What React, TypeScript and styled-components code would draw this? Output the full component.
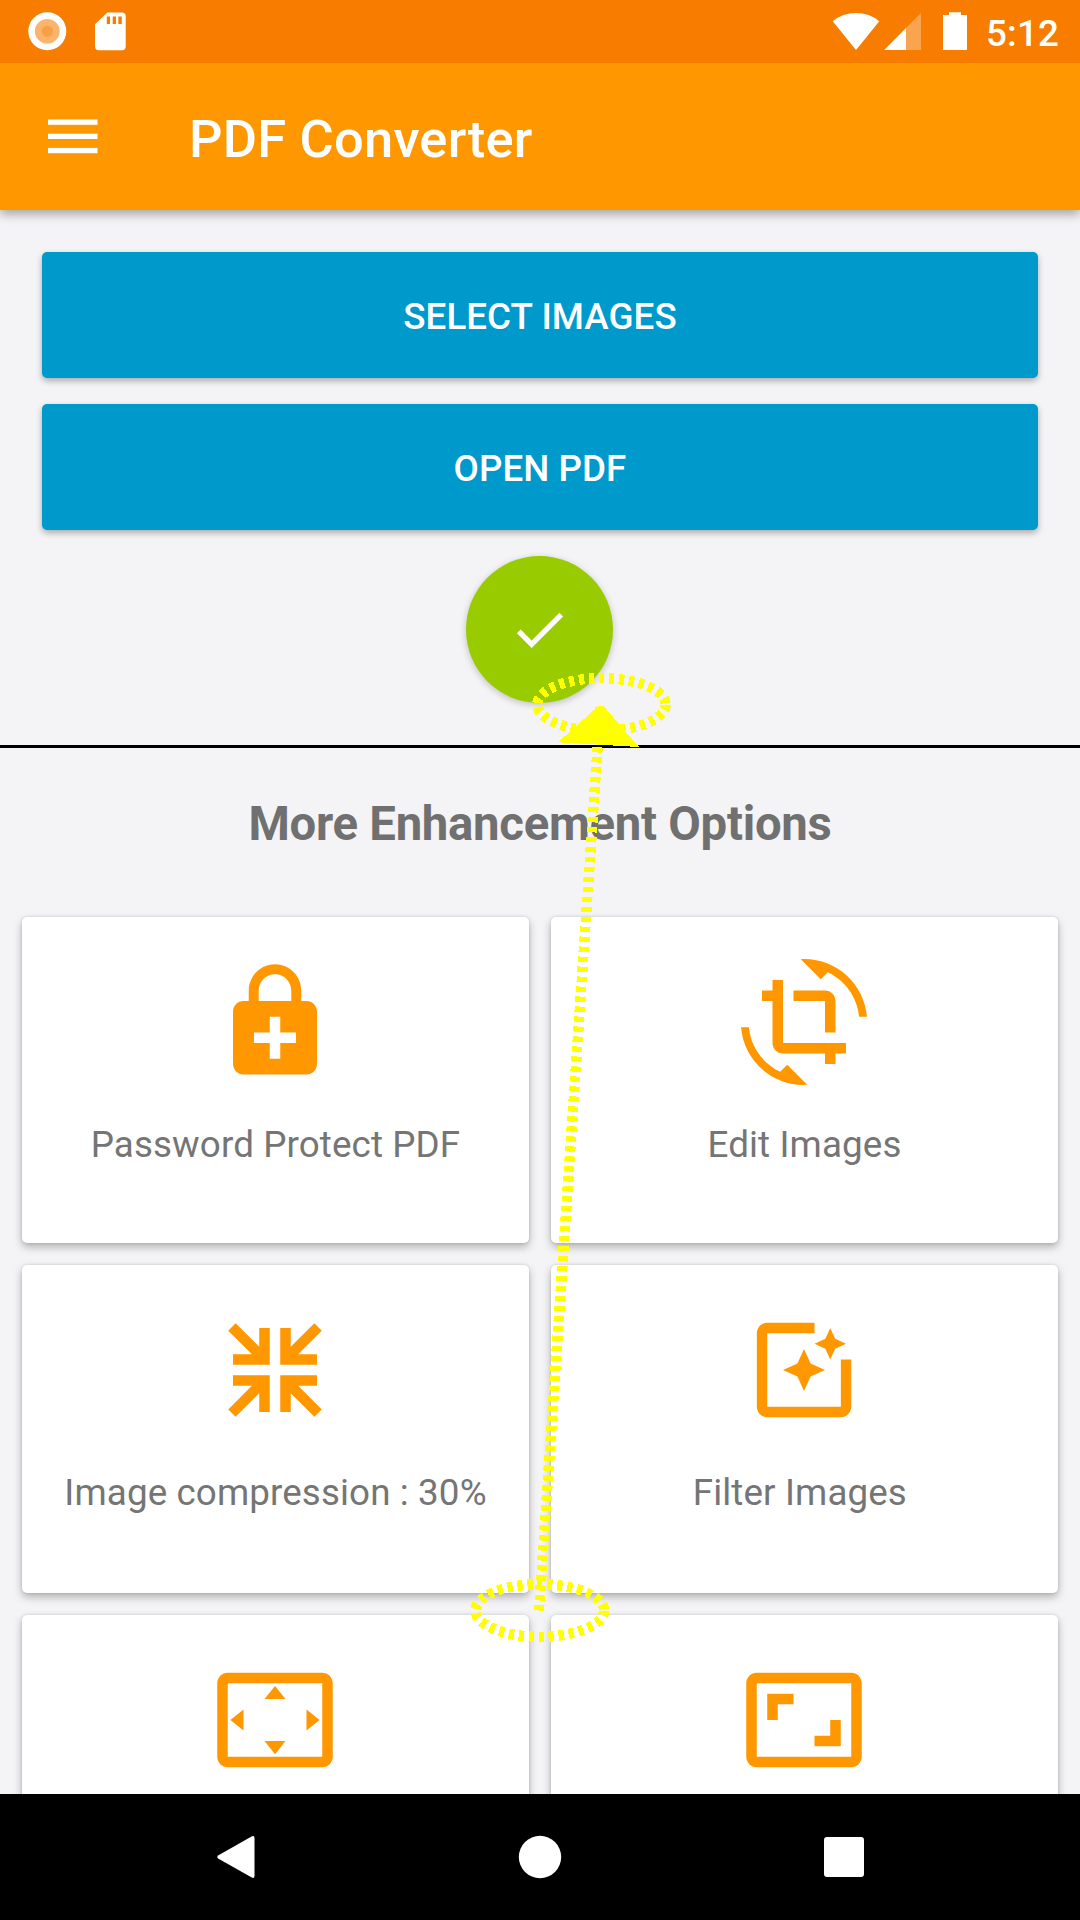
import React from "react";
import styled, { createGlobalStyle } from "styled-components";

const GlobalStyle = createGlobalStyle`
  *, *::before, *::after { box-sizing: border-box; }
  html, body { margin: 0; padding: 0; background: #f4f4f6; }
  svg { display: block; flex: none; }
`;

const ORANGE = "#ff9800";

const Screen = styled.div`
  position: relative;
  display: flex;
  flex-direction: column;
  width: 1080px;
  height: 1920px;
  overflow: hidden;
  background: #f4f4f6;
  font-family: Roboto, "Noto Sans", sans-serif;
`;

const StatusBar = styled.header`
  position: relative;
  z-index: 2;
  display: flex;
  justify-content: space-between;
  flex: none;
  height: 63px;
  padding: 0 21px 0 28px;
  background: #f77c00;
`;

const StatusGroup = styled.div`
  display: flex;
`;

const Clock = styled.span`
  width: 73px;
  padding-top: 12px;
  margin-left: 19px;
  color: #fff;
  font-size: 36.75px;
  font-weight: 500;
  letter-spacing: 0.2px;
  line-height: 43px;
  white-space: nowrap;
`;

const AppBar = styled.div`
  position: relative;
  z-index: 1;
  display: flex;
  align-items: center;
  flex: none;
  height: 147px;
  padding-left: 48px;
  background: ${ORANGE};
  box-shadow: 0 4px 10px rgba(0, 0, 0, 0.34);
`;

const Title = styled.h1`
  margin: 4px 0 0 91px;
  color: #fff;
  font-size: 52.5px;
  font-weight: 500;
  letter-spacing: 0.2px;
  line-height: 62px;
`;

const Content = styled.main`
  display: flex;
  flex-direction: column;
  flex: 1;
  min-height: 0;
  overflow: hidden;
`;

const Actions = styled.section`
  display: flex;
  flex-direction: column;
  align-items: center;
  flex: none;
  gap: 26px;
  height: 535px;
  padding: 42px 42px 0;
`;

const ActionButton = styled.button`
  flex: none;
  width: 100%;
  height: 126px;
  padding: 2px 0 0;
  border: 0;
  border-radius: 5px;
  background: #0099cc;
  box-shadow: 0 3px 6px rgba(0, 0, 0, 0.3);
  color: #fff;
  font-family: inherit;
  font-size: 36.75px;
  font-weight: 500;
  letter-spacing: 0.05px;
  text-transform: uppercase;
`;

const ConfirmButton = styled.button`
  display: flex;
  align-items: center;
  justify-content: center;
  flex: none;
  width: 147px;
  height: 147px;
  margin-right: 1px;
  padding: 0;
  border: 0;
  border-radius: 50%;
  background: #99cc00;
  box-shadow: 0 2px 7px rgba(0, 0, 0, 0.22);
`;

const Divider = styled.hr`
  flex: none;
  width: 100%;
  height: 3px;
  margin: 0;
  border: 0;
  background: #000;
`;

const Heading = styled.h2`
  flex: none;
  height: 169px;
  margin: 0;
  padding-top: 48px;
  color: #707070;
  font-size: 47.25px;
  font-weight: 700;
  letter-spacing: -0.26px;
  line-height: 56px;
  text-align: center;
`;

const Grid = styled.section`
  display: grid;
  flex: none;
  grid-template-columns: 507px 507px;
  grid-template-rows: 326px 328px 328px;
  gap: 22px;
  padding-left: 22px;
`;

const Card = styled.article`
  display: flex;
  flex-direction: column;
  align-items: center;
  padding: 42px 1px 0 0;
  border-radius: 5px;
  background: #fff;
  box-shadow: 0 4px 8px rgba(0, 0, 0, 0.28), 0 0 3px rgba(0, 0, 0, 0.12);
`;

const CardLabel = styled.span`
  margin: 38px 0 0 1px;
  color: #757575;
  font-size: 36.75px;
  letter-spacing: 0.12px;
  line-height: 43px;
  white-space: pre;
`;

const NavBar = styled.nav`
  position: relative;
  z-index: 1;
  display: grid;
  grid-template-columns: repeat(3, 304px);
  justify-content: center;
  justify-items: center;
  align-items: center;
  flex: none;
  height: 126px;
  background: #000;
`;

const Annotation = styled.svg`
  position: absolute;
  top: 0;
  left: 0;
  z-index: 2;
  pointer-events: none;
`;

const FRAME =
  "M21 3H3c-1.1 0-2 .9-2 2v14c0 1.1.9 2 2 2h18c1.1 0 2-.9 2-2V5c0-1.1-.9-2-2-2zm0 16.01H3V4.99h18v14.02z";

const options = [
  {
    label: "Password Protect PDF",
    path: "M18 8h-1V6c0-2.76-2.24-5-5-5S7 3.24 7 6v2H6c-1.1 0-2 .9-2 2v10c0 1.1.9 2 2 2h12c1.1 0 2-.9 2-2V10c0-1.1-.9-2-2-2zM8.9 6c0-1.71 1.39-3.1 3.1-3.1s3.1 1.39 3.1 3.1v2H8.9V6zM16 16h-3v3h-2v-3H8v-2h3v-3h2v3h3v2z",
  },
  {
    label: "Edit Images",
    path: "M7.47 21.49C4.2 19.93 1.86 16.76 1.5 13H0c.51 6.16 5.66 11 11.95 11 .23 0 .44-.02.66-.03L8.8 20.15l-1.33 1.34zM12.05 0c-.23 0-.44.02-.66.04l3.81 3.81 1.33-1.33C19.8 4.07 22.14 7.24 22.5 11H24c-.51-6.16-5.66-11-11.95-11zM16 14h2V8c0-1.11-.9-2-2-2h-6v2h6v6zm-8 2V4H6v2H4v2h2v8c0 1.1.89 2 2 2h8v2h2v-2h2v-2H8z",
  },
  {
    label: "Image compression : 30%",
    path: "M4.5 3.09L9 7.59V4h2v7H4V9h3.59L3.09 4.5zM19.5 3.09L15 7.59V4h-2v7h7V9h-3.59l4.5-4.5zM4.5 20.91L9 16.41V20h2v-7H4v2h3.59l-4.5 4.5zM19.5 20.91L15 16.41V20h-2v-7h7v2h-3.59l4.5 4.5z",
  },
  {
    label: "Filter Images ",
    path: "M19.02 10v9H5V5h9V3H5.02c-1.1 0-2 .9-2 2v14c0 1.1.9 2 2 2H19c1.1 0 2-.9 2-2v-9h-1.98zM17 10l.94-2.06L20 7l-2.06-.94L17 4l-.94 2.06L14 7l2.06.94L17 10zm-3.75.75L12 8l-1.25 2.75L8 12l2.75 1.25L12 16l1.25-2.75L16 12l-2.75-1.25z",
  },
  {
    label: "",
    path:
      "M12.01 5.5L10 8h4l-1.99-2.5zM18 10v4l2.5-1.99L18 10zM6 10l-2.5 2.01L6 14v-4zM14 16h-4l2.01 2.5L14 16z" +
      FRAME,
  },
  {
    label: "",
    path: "M19 12h-2v3h-3v2h5v-5zM7 9h3V7H5v5h2V9z" + FRAME,
  },
];

export default function App() {
  return (
    <>
      <GlobalStyle />
      <Screen>
        <StatusBar>
          <StatusGroup>
            <svg width="100" height="63" viewBox="28 0 100 63">
              <circle cx="47.3" cy="31.3" r="19" fill="#fff" />
              <circle cx="47.3" cy="31.3" r="12.4" fill="#fbb46c" />
              <circle cx="47.3" cy="31.3" r="5.6" fill="#f9a046" />
              <path
                fill="#fff"
                fillRule="evenodd"
                d="M107.3 12.4H122q3.7 0 3.7 3.7V46.5q0 3.7-3.7 3.7H98.8Q95 50.2 95 46.5V24.3ZM106.8 16.4V24H110V16.4ZM112.7 16.4V24H116V16.4ZM118.3 16.4V24H121.8V16.4Z"
              />
            </svg>
          </StatusGroup>
          <StatusGroup>
            <svg width="135" height="63" viewBox="832 0 135 63">
              <path d="M856 50L832.7 21.2Q842.6 13 856 13T879.3 21.2Z" fill="#fff" />
              <path d="M884.2 50L906 28.1V50Z" fill="#fff" />
              <path d="M906 28.1L921 13V50H906Z" fill="#f9a54f" />
              <path d="M943 15H949V12.2H961V15H967V50H943Z" fill="#fff" />
            </svg>
            <Clock>5:12</Clock>
          </StatusGroup>
        </StatusBar>

        <AppBar>
          <svg width="50" height="36" viewBox="0 0 50 36" fill="#fff">
            <rect y="0.5" width="49.5" height="5.3" />
            <rect y="14.7" width="49.5" height="5.3" />
            <rect y="28.9" width="49.5" height="5.3" />
          </svg>
          <Title>PDF Converter</Title>
        </AppBar>

        <Content>
          <Actions>
            <ActionButton>Select Images</ActionButton>
            <ActionButton>Open PDF</ActionButton>
            <ConfirmButton aria-label="Confirm">
              <svg width="63" height="63" viewBox="0 0 24 24" fill="#fff">
                <path d="M9 16.17L4.83 12l-1.42 1.41L9 19 21 7l-1.41-1.41z" />
              </svg>
            </ConfirmButton>
          </Actions>
          <Divider />
          <Heading>More Enhancement Options</Heading>
          <Grid>
            {options.map((option) => (
              <Card key={option.path}>
                <svg width="126" height="126" viewBox="0 0 24 24" fill={ORANGE}>
                  <path d={option.path} />
                </svg>
                {option.label && <CardLabel>{option.label}</CardLabel>}
              </Card>
            ))}
          </Grid>
        </Content>

        <NavBar>
          <svg width="42" height="44" viewBox="0 0 42 44" fill="#fff">
            <path d="M37 1.3Q39.5 0 39.5 3.2V40.8Q39.5 44 36.8 42.5L3.5 23.8Q1 22 3.5 20.2Z" />
          </svg>
          <svg width="44" height="44" viewBox="0 0 44 44" fill="#fff">
            <circle cx="22" cy="22" r="21.2" />
          </svg>
          <svg width="40" height="40" viewBox="0 0 40 40" fill="#fff">
            <rect width="40" height="40" rx="3" />
          </svg>
        </NavBar>

        <Annotation width="1080" height="1920" viewBox="0 0 1080 1920" shapeRendering="crispEdges">
          <g fill="none" stroke="#ffff00" strokeWidth="10.4" strokeDasharray="5.3 4.7">
            <ellipse cx="601.5" cy="704.5" rx="64.3" ry="26.3" />
            <ellipse cx="539.8" cy="1610.5" rx="64.3" ry="26.3" />
            <path d="M539 1610.5L600.5 704" />
          </g>
          <path d="M598.5 706H603.5L639 747L558 742.3Z" fill="#ffff00" />
        </Annotation>
      </Screen>
    </>
  );
}
